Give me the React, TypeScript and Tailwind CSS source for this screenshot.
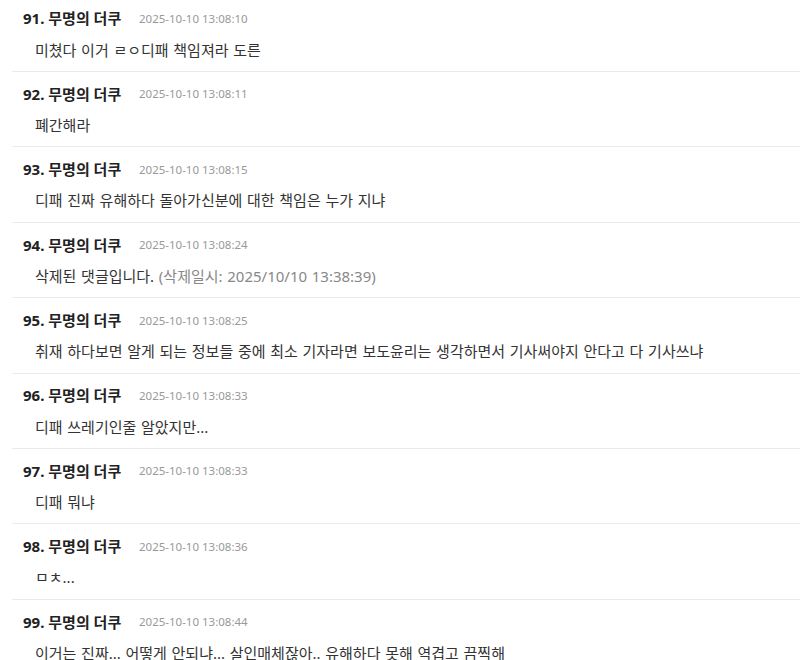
import React from "react";

type C = { n: number; time: string; text: React.ReactNode };

const comments: C[] = [
  { n: 91, time: "2025-10-10 13:08:10", text: "미쳤다 이거 ㄹㅇ디패 책임져라 도른" },
  { n: 92, time: "2025-10-10 13:08:11", text: "폐간해라" },
  { n: 93, time: "2025-10-10 13:08:15", text: "디패 진짜 유해하다 돌아가신분에 대한 책임은 누가 지냐" },
  {
    n: 94,
    time: "2025-10-10 13:08:24",
    text: (
      <>
        삭제된 댓글입니다. <span className="text-[#888888]">(삭제일시: 2025/10/10 13:38:39)</span>
      </>
    ),
  },
  { n: 95, time: "2025-10-10 13:08:25", text: "취재 하다보면 알게 되는 정보들 중에 최소 기자라면 보도윤리는 생각하면서 기사써야지 안다고 다 기사쓰냐" },
  { n: 96, time: "2025-10-10 13:08:33", text: "디패 쓰레기인줄 알았지만..." },
  { n: 97, time: "2025-10-10 13:08:33", text: "디패 뭐냐" },
  { n: 98, time: "2025-10-10 13:08:36", text: "ㅁㅊ..." },
  { n: 99, time: "2025-10-10 13:08:44", text: "이거는 진짜... 어떻게 안되냐... 살인매체잖아.. 유해하다 못해 역겹고 끔찍해" },
];

export default function App() {
  return (
    <div
      className="w-[800px] h-[660px] overflow-hidden bg-white"
      style={{ fontFamily: '"Noto Sans", "Noto Sans CJK KR", sans-serif' }}
    >
      <div className="ml-3 mt-[-3.4px]">
        {comments.map((c) => (
          <div key={c.n} className="pt-3 pb-[10px] border-b-[1.5px] border-[#ebebeb]">
            <div className="flex items-center h-5 pl-[11px]">
              <span className="text-[15px] font-bold text-[#222222] w-[116px]">
                {c.n}. 무명의 더쿠
              </span>
              <span className="text-[11.5px] text-[#999999]">{c.time}</span>
            </div>
            <div className="mt-[10px] pl-[23px] text-[15px] leading-[22.4px] text-[#333333] whitespace-nowrap [word-spacing:0.8px]">
              {c.text}
            </div>
          </div>
        ))}
      </div>
    </div>
  );
}
